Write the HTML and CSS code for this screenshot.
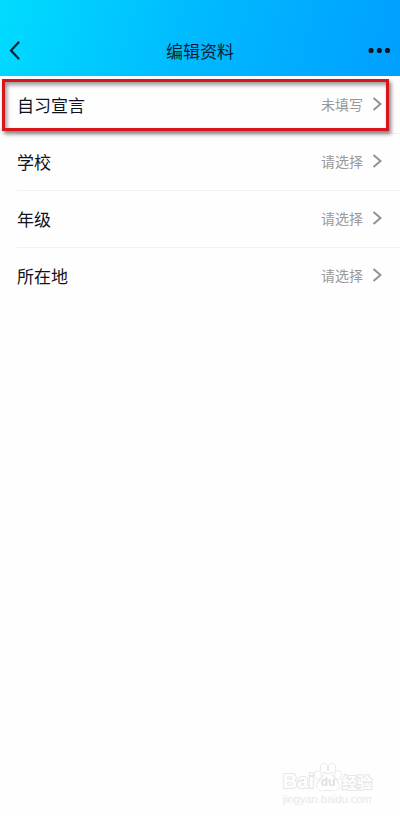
FILE: index.html
```html
<!DOCTYPE html>
<html lang="zh-CN">
<head>
<meta charset="utf-8">
<meta name="viewport" content="width=device-width, initial-scale=1">
<title>编辑资料</title>
<link rel="stylesheet" href="styles.css">
</head>
<body>
<header class="topbar">
  <button class="icon-button" type="button" aria-label="返回">
    <svg width="12" height="20" viewBox="0 0 12 20"><path d="M9.500 1.500 2 9.500l7.500 8" fill="none" stroke="#06202f" stroke-width="2.200" stroke-linecap="round"/></svg>
  </button>
  <h1 class="title">编辑资料</h1>
  <button class="icon-button icon-button-end" type="button" aria-label="更多">
    <svg width="23" height="6" viewBox="0 0 23 6" fill="#06182b"><circle cx="3" cy="2.500" r="2.600"/><circle cx="11.300" cy="2.500" r="2.600"/><circle cx="19.500" cy="2.500" r="2.600"/></svg>
  </button>
</header>
<main class="list">
  <button class="row" type="button">
    <span class="label">自习宣言</span><span class="value">未填写</span>
    <svg class="chevron" width="10" height="14" viewBox="0 0 10 14"><path d="M1.500 1 8.500 7l-7 6"/></svg>
    <span class="highlight"></span>
  </button>
  <button class="row" type="button">
    <span class="label">学校</span><span class="value">请选择</span>
    <svg class="chevron" width="10" height="14" viewBox="0 0 10 14"><path d="M1.500 1 8.500 7l-7 6"/></svg>
  </button>
  <button class="row" type="button">
    <span class="label">年级</span><span class="value">请选择</span>
    <svg class="chevron" width="10" height="14" viewBox="0 0 10 14"><path d="M1.500 1 8.500 7l-7 6"/></svg>
  </button>
  <button class="row" type="button">
    <span class="label">所在地</span><span class="value">请选择</span>
    <svg class="chevron" width="10" height="14" viewBox="0 0 10 14"><path d="M1.500 1 8.500 7l-7 6"/></svg>
  </button>
</main>
<footer class="watermark">
  <div class="brand">
    <span class="brand-latin">Bai</span>
    <span class="paw">
      <svg width="28" height="30" viewBox="0 0 28 30" fill="#fff" stroke="#dcdcdc" stroke-width="1.200"><ellipse cx="4" cy="13" rx="3" ry="4" transform="rotate(-15 4 13)"/><ellipse cx="10" cy="6" rx="3.300" ry="4.500"/><ellipse cx="18" cy="6" rx="3.300" ry="4.500"/><ellipse cx="24" cy="13" rx="3" ry="4" transform="rotate(15 24 13)"/><path d="M14 11.500c-4 0-5 3.500-8 6.500-3 3-4 6-2 8.500 3 4 6 1.500 10 1.500s7 2.500 10-1.500c2-2.500 1-5.500-2-8.500-3-3-4-6.500-8-6.500Z"/></svg>
      <span class="paw-text">du</span>
    </span>
    <span class="brand-cjk">经验</span>
  </div>
  <div class="site">jingyan.baidu.com</div>
</footer>
</body>
</html>
```
FILE: styles.css
```css
* {
  box-sizing: border-box;
}

body {
  margin: 0;
  min-height: 100vh;
  display: flex;
  flex-direction: column;
  background: #fefefe;
  color: #10131f;
  font-family: "Noto Sans CJK SC", sans-serif;
}

button {
  border: 0;
  padding: 0;
  background: none;
  color: inherit;
  font: inherit;
}

.topbar {
  display: grid;
  grid-template-columns: 1fr auto 1fr;
  align-items: center;
  height: 76px;
  padding: 26px 9px 0;
  background: linear-gradient(105deg, #00dcff 0%, #00baff 48%, #009fff 100%);
}

.icon-button {
  display: flex;
  justify-content: flex-start;
}

.icon-button-end {
  justify-content: flex-end;
}

.title {
  margin: 0;
  font-size: 17px;
  line-height: 24px;
  font-weight: 400;
  color: #06202f;
}

.list {
  display: flex;
  flex-direction: column;
  flex: 1;
  padding-top: 1px;
}

.row {
  position: relative;
  display: flex;
  align-items: center;
  height: 57px;
  margin-left: 17px;
  padding: 0 18px 2px 0;
  border-bottom: 1px solid #f1f1f2;
  text-align: left;
}

.row:last-child {
  border-bottom-color: transparent;
}

.label {
  flex: 1;
  padding-top: 2px;
  font-size: 17px;
  line-height: 24px;
}

.value {
  margin-right: 9px;
  font-size: 14px;
  line-height: 18px;
  color: #999;
}

.chevron {
  fill: none;
  stroke: #929292;
  stroke-width: 2;
}

.highlight {
  position: absolute;
  inset: 2px 11px 2px -15px;
  border: 3px solid #d8151a;
  box-shadow: 2px 3px 4px rgba(0, 0, 0, 0.5), inset 2px 3px 4px rgba(0, 0, 0, 0.4);
}

.watermark {
  align-self: flex-end;
  padding: 0 28px 10px 0;
  color: #fff;
  font-family: "Liberation Sans", sans-serif;
}

.brand {
  display: flex;
  align-items: flex-end;
  height: 30px;
  -webkit-text-stroke: 2px #e6e6e6;
  paint-order: stroke fill;
}

.brand-latin {
  font-size: 20px;
  line-height: 22px;
  font-weight: 700;
}

.paw {
  position: relative;
  height: 30px;
}

.paw-text {
  position: absolute;
  inset: 13px 0 0;
  font-size: 12px;
  line-height: 14px;
  font-weight: 700;
  text-align: center;
  color: #dedede;
  -webkit-text-stroke: 0;
}

.brand-cjk {
  font-family: "Noto Sans CJK SC", sans-serif;
  font-size: 15px;
  line-height: 20px;
  font-weight: 700;
}

.site {
  font-size: 11px;
  line-height: 14px;
  color: #e8e8e8;
}
```
